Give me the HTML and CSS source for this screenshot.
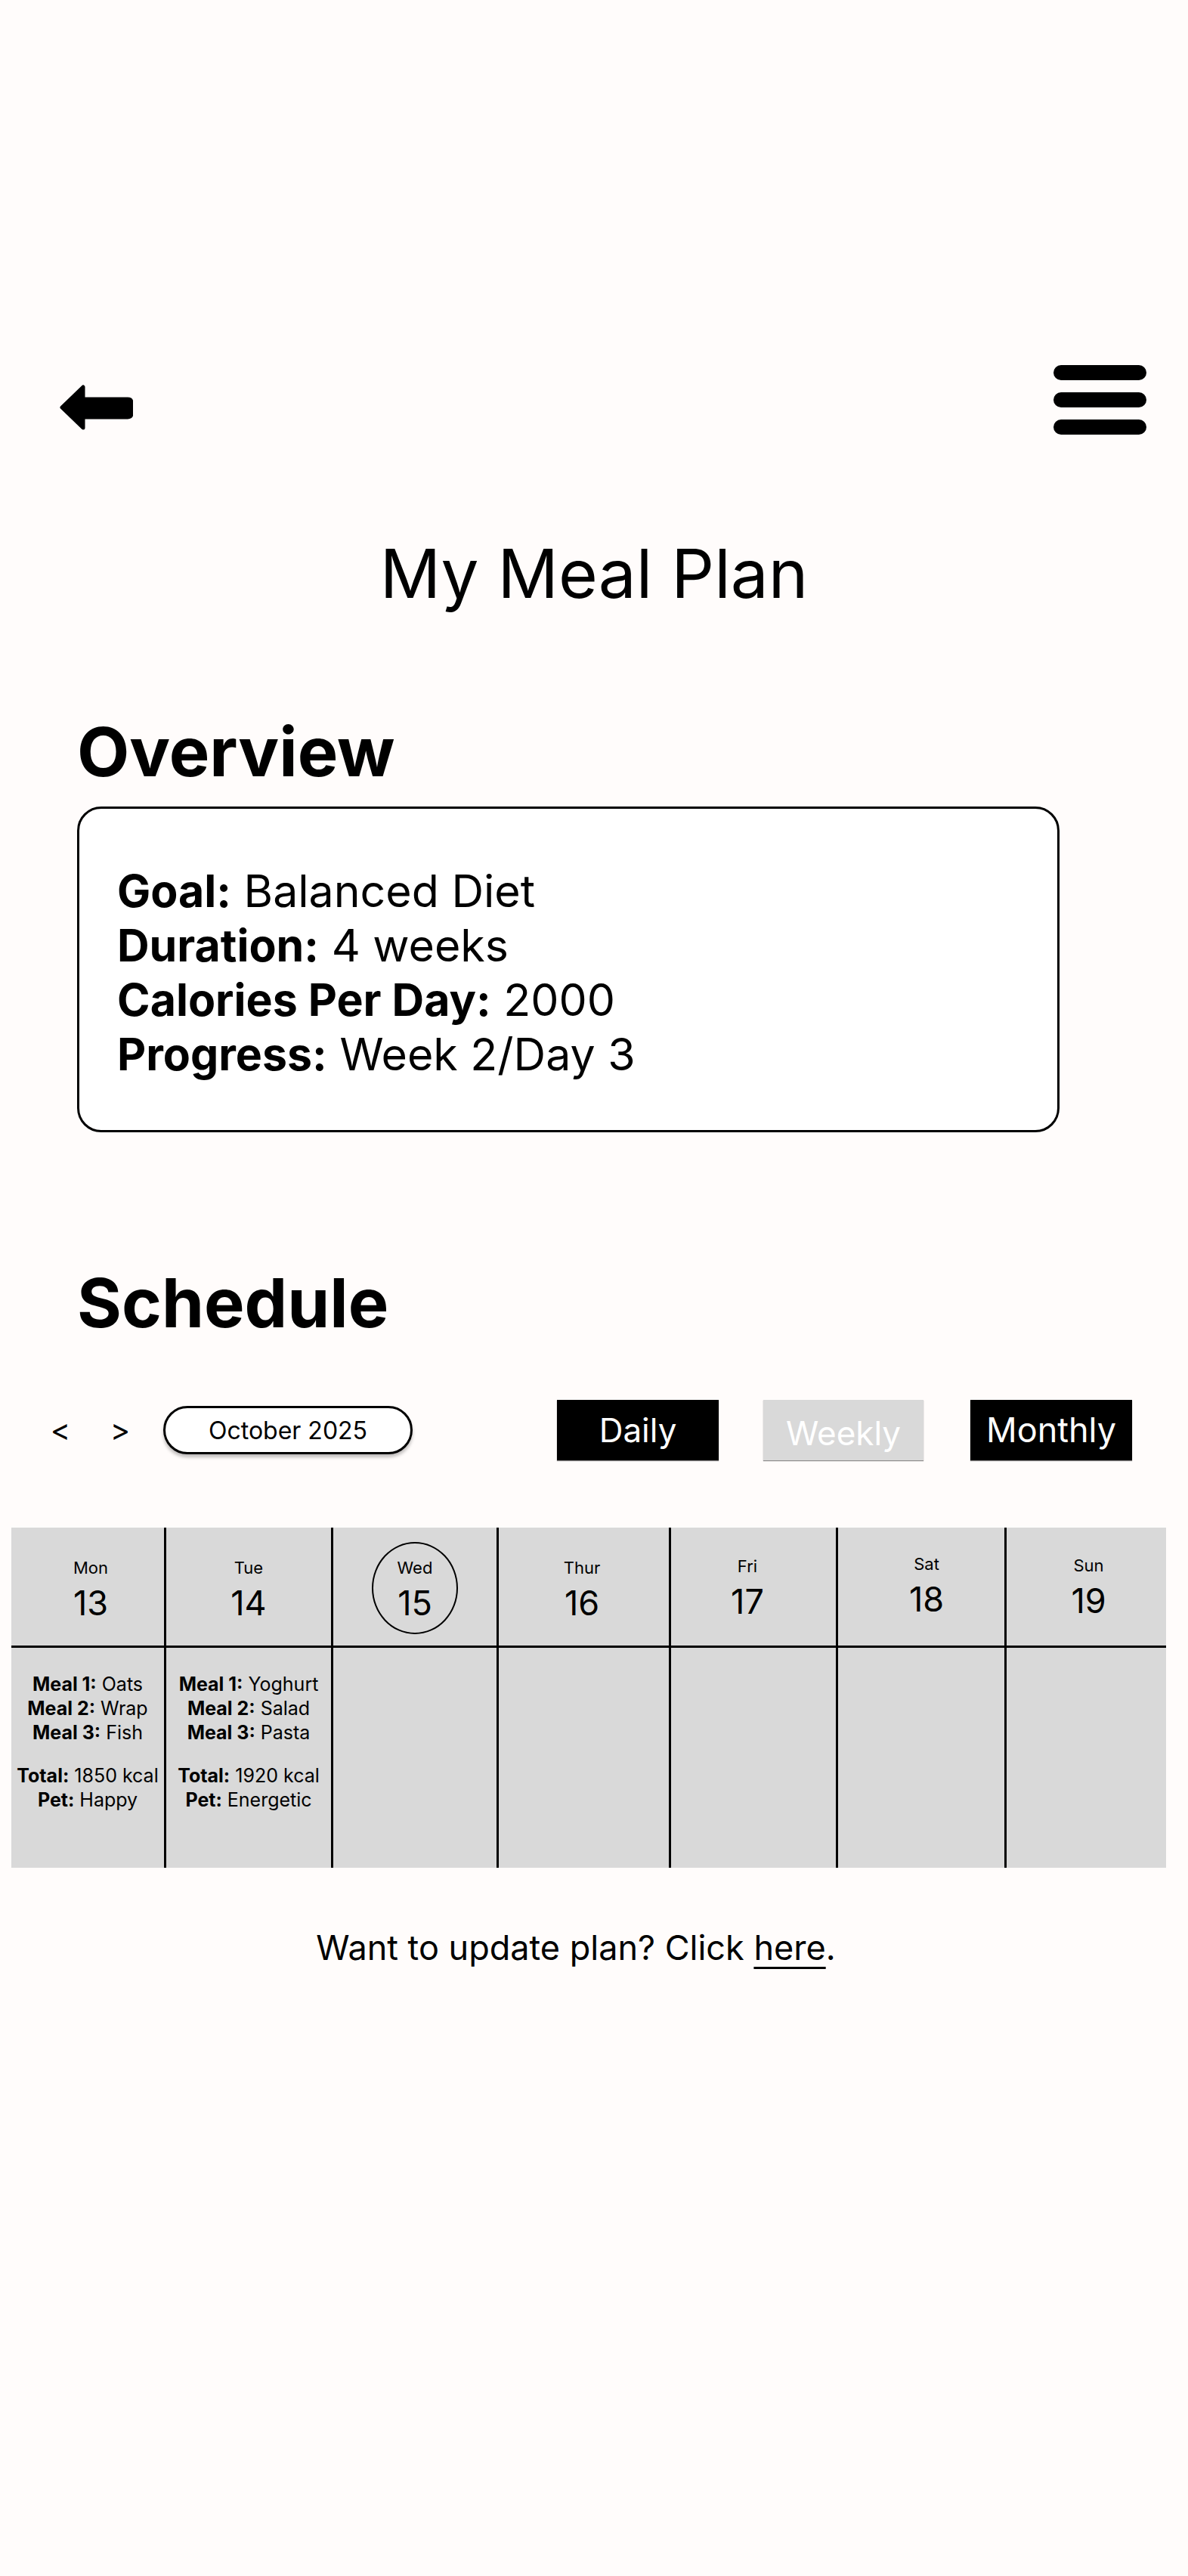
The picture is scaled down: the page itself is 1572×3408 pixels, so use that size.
FILE: index.html
```html
<!DOCTYPE html>
<html lang="en">
<head>
<meta charset="utf-8">
<title>My Meal Plan</title>
<link rel="stylesheet" href="styles.css">
</head>
<body>
<div class="page">
  <header class="topbar">
    <svg class="back" width="98" height="60" viewBox="0 0 98 60" aria-label="Back">
      <path d="M4 30 L32 3 L32 19 L91 19 Q96 19 96 24 L96 38 Q96 43 91 43 L32 43 L32 57 Z" fill="#000" stroke="#000" stroke-width="5" stroke-linejoin="round"/>
    </svg>
    <div class="menu" aria-label="Menu"><span></span><span></span><span></span></div>
  </header>

  <h1 class="title">My Meal Plan</h1>

  <section class="section">
    <h2 class="section-title">Overview</h2>
    <div class="card">
      <p class="card-line"><b>Goal:</b> Balanced Diet</p>
      <p class="card-line"><b>Duration:</b> 4 weeks</p>
      <p class="card-line"><b>Calories Per Day:</b> 2000</p>
      <p class="card-line"><b>Progress:</b> Week 2/Day 3</p>
    </div>
  </section>

  <section class="section schedule">
    <h2 class="section-title">Schedule</h2>
    <div class="controls">
      <span class="nav">&lt;</span>
      <span class="nav">&gt;</span>
      <div class="month">October 2025</div>
      <div class="views">
        <div class="view view-dark">Daily</div>
        <div class="view view-light">Weekly</div>
        <div class="view view-dark view-monthly">Monthly</div>
      </div>
    </div>

    <div class="calendar">
      <div class="day day-mon">
        <div class="day-head"><div class="dname">Mon</div><div class="dnum">13</div></div>
        <div class="day-body">
          <p><b>Meal 1:</b> Oats</p>
          <p><b>Meal 2:</b> Wrap</p>
          <p><b>Meal 3:</b> Fish</p>
          <p class="gap"><b>Total:</b> 1850 kcal</p>
          <p><b>Pet:</b> Happy</p>
        </div>
      </div>
      <div class="day">
        <div class="day-head"><div class="dname">Tue</div><div class="dnum">14</div></div>
        <div class="day-body">
          <p><b>Meal 1:</b> Yoghurt</p>
          <p><b>Meal 2:</b> Salad</p>
          <p><b>Meal 3:</b> Pasta</p>
          <p class="gap"><b>Total:</b> 1920 kcal</p>
          <p><b>Pet:</b> Energetic</p>
        </div>
      </div>
      <div class="day">
        <div class="day-head today"><div class="dname">Wed</div><div class="dnum">15</div></div>
        <div class="day-body"></div>
      </div>
      <div class="day">
        <div class="day-head head-thu"><div class="dname">Thur</div><div class="dnum">16</div></div>
        <div class="day-body"></div>
      </div>
      <div class="day">
        <div class="day-head head-fri"><div class="dname">Fri</div><div class="dnum">17</div></div>
        <div class="day-body"></div>
      </div>
      <div class="day">
        <div class="day-head head-sat"><div class="dname">Sat</div><div class="dnum">18</div></div>
        <div class="day-body"></div>
      </div>
      <div class="day">
        <div class="day-head head-sun"><div class="dname">Sun</div><div class="dnum">19</div></div>
        <div class="day-body"></div>
      </div>
    </div>
  </section>

  <p class="footer">Want to update plan? Click <a class="link" href="#">here</a>.</p>
</div>
</body>
</html>
```

FILE: styles.css
```css
* { box-sizing: border-box; }

html, body {
  margin: 0;
  padding: 0;
  background: #fffcfb;
}

body {
  font-family: Inter, "Noto Sans", "Liberation Sans", sans-serif;
  color: #000;
}

.page {
  width: 1572px;
  min-height: 3408px;
  background: #fffcfb;
}

/* top bar */
.topbar {
  display: flex;
  justify-content: space-between;
  align-items: flex-start;
  padding: 483px 55px 0 78px;
}

.back {
  display: block;
  margin-top: 26px;
}

.menu {
  display: flex;
  flex-direction: column;
  gap: 16px;
}

.menu span {
  display: block;
  width: 123px;
  height: 20px;
  border-radius: 10px;
  background: #000;
}

/* title */
.title {
  margin: 130px 0 0;
  font-size: 89px;
  line-height: 108px;
  font-weight: 400;
  text-align: center;
}

/* sections */
.section {
  padding-left: 102px;
}

.section-title {
  margin: 127px 0 0;
  font-size: 90px;
  line-height: 110px;
  font-weight: 700;
}

.schedule {
  padding-left: 0;
}

.schedule .section-title {
  margin: 171px 0 0 102px;
}

/* overview card */
.card {
  margin-top: 17px;
  width: 1300px;
  border: 3px solid #000;
  border-radius: 32px;
  background: #fff;
  padding: 73px 50px 64px;
}

.card-line {
  margin: 0;
  font-size: 59px;
  line-height: 72px;
}

.card-line b { font-weight: 700; }

/* controls */
.controls {
  display: flex;
  align-items: center;
  height: 80px;
  margin-top: 73px;
  padding-left: 60px;
}

.nav {
  display: block;
  width: 40px;
  text-align: center;
  font-size: 40px;
  line-height: 48px;
}

.nav + .nav {
  margin-left: 39px;
}

.month {
  margin-left: 37px;
  width: 330px;
  height: 64px;
  border: 3px solid #000;
  border-radius: 32px;
  background: #fff;
  box-shadow: 0 4px 4px rgba(0, 0, 0, 0.25);
  display: flex;
  align-items: center;
  justify-content: center;
  font-size: 32px;
}

.views {
  display: flex;
  margin-left: 191px;
  gap: 59px;
}

.view {
  width: 214px;
  height: 80px;
  display: flex;
  align-items: center;
  justify-content: center;
  font-size: 44px;
  color: #fff;
  box-shadow: 0 1px 1px rgba(0, 0, 0, 0.45);
}

.view-dark { background: #000; }

.view-light {
  background: #d9d9d9;
  padding-top: 8px;
  width: 212px;
}

.view-monthly {
  margin-left: 3px;
  padding-bottom: 2px;
  font-size: 45px;
}

/* calendar */
.calendar {
  display: grid;
  grid-template-columns: 202px 221px 219px 228px 221px 223px 214px;
  width: 1528px;
  margin: 89px 0 0 15px;
  background: #d9d9d9;
}

.day {
  display: flex;
  flex-direction: column;
  border-left: 3px solid #000;
  height: 450px;
}

.day-mon {
  border-left: 0;
}

.day-head {
  position: relative;
  height: 159px;
  border-bottom: 3px solid #000;
  padding-top: 40px;
  text-align: center;
}

.day-mon .day-head {
  padding-left: 8px;
}

.head-thu { padding-right: 5px; }
.head-fri { padding-top: 38px; padding-right: 16px; }
.head-sat { padding-top: 35px; padding-left: 14px; }
.head-sun { padding-top: 37px; padding-left: 6px; }

.today::before {
  content: "";
  position: absolute;
  top: 19px;
  left: 50%;
  width: 110px;
  height: 118px;
  margin-left: -57px;
  border: 2.5px solid #000;
  border-radius: 50%;
}

.dname {
  font-size: 22px;
  line-height: 26px;
}

.dnum {
  margin-top: 7px;
  font-size: 45px;
  line-height: 54px;
}

.day-body {
  padding-top: 32px;
  text-align: center;
}

.day-body p {
  margin: 0;
  font-size: 25px;
  line-height: 32px;
  white-space: nowrap;
}

.day-body b { font-weight: 700; }

.day-body .gap {
  margin-top: 25px;
}

/* footer */
.footer {
  margin: 79px 0 0;
  padding-right: 48px;
  text-align: center;
  font-size: 45px;
  line-height: 54px;
}

.link {
  color: #000;
  text-decoration: underline;
  text-decoration-thickness: 3px;
  text-underline-offset: 9px;
}
```
